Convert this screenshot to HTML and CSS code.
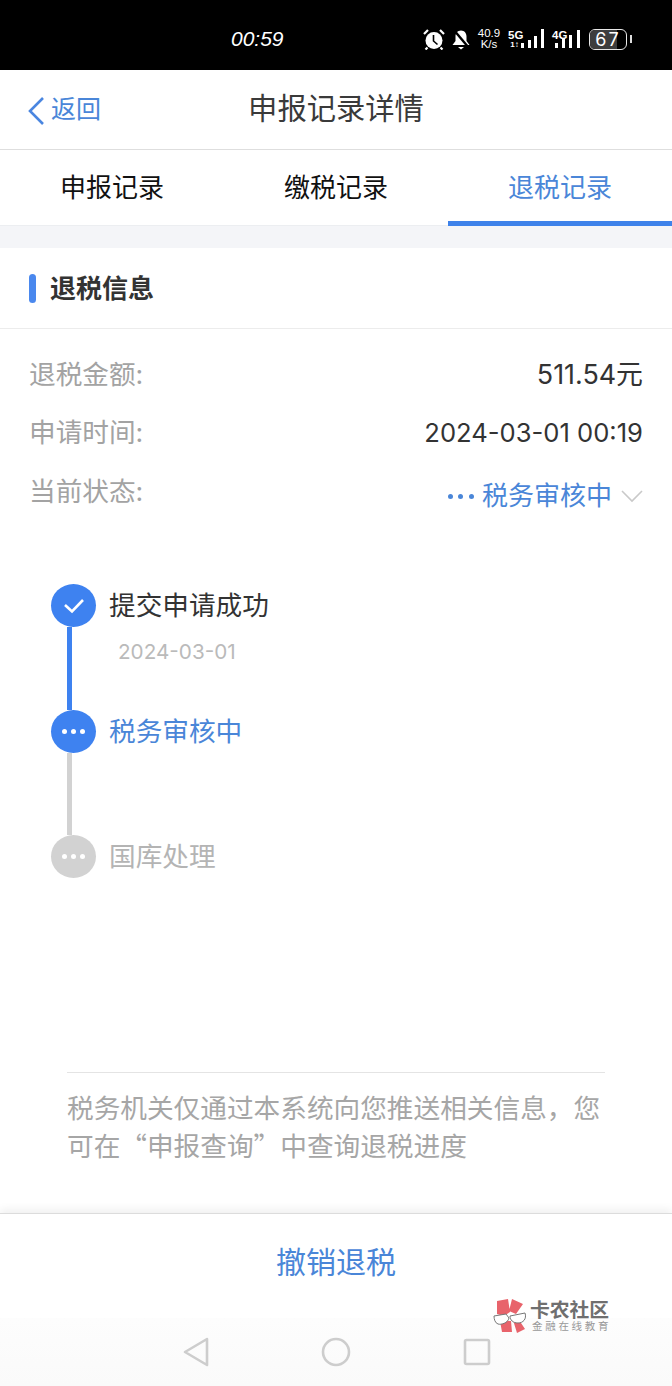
FILE: index.html
```html
<!DOCTYPE html>
<html lang="zh-CN">
<head>
    <meta charset="UTF-8">
    <meta name="viewport" content="width=device-width, initial-scale=1.0">
    <title>申报记录详情</title>
    <link rel="stylesheet" href="styles.css">
</head>
<body>
    <div class="page">
        <!-- 状态栏 -->
        <div class="status-bar">
            <span class="clock">00:59</span>
            <div class="status-icons">
                <svg class="ic-alarm" width="22" height="21" viewBox="0 0 22 21">
                    <circle cx="11" cy="11.500" r="8.500" fill="#fff"/>
                    <path d="M10.500 6V12l4 3.500" fill="none" stroke="#000" stroke-width="1.600"/>
                    <path d="M1 5l4-4M21 5l-4-4M4.500 18.500l-2 2M17.500 18.500l2 2" stroke="#fff" stroke-width="2.200"/>
                </svg>
                <svg class="ic-bell" width="18" height="21" viewBox="0 0 18 21">
                    <path d="M9 1.500c3.500 0 5.500 2.800 5.500 6v4.500l3 4h-17l3-4V7.500c0-3.200 2-6 5.500-6z" fill="#fff"/>
                    <path d="M6 18h6l-3 2.500z" fill="#fff"/>
                    <path d="M1 0l16 19" stroke="#000" stroke-width="2.400"/>
                </svg>
                <div class="speed"><span>40.9</span><span>K/s</span></div>
                <div class="net net-5g">
                    <div class="net-label"><span>5G</span><span class="net-sub">1↕</span></div>
                    <svg width="24" height="20" viewBox="0 0 24 20">
                        <path d="M0 14h3v5H0zM7 11h3v8H7zM13 7h3v12h-3zM20 0h3v19h-3z" fill="#fff"/>
                    </svg>
                </div>
                <div class="net net-4g">
                    <div class="net-label"><span>4G</span></div>
                    <svg width="27" height="20" viewBox="0 0 27 20">
                        <path d="M1 14h3v5H1zM8 9h3v10H8zM15 6h3v13h-3zM23 1h3v18h-3z" fill="#fff"/>
                    </svg>
                </div>
                <div class="battery"><div class="battery-fill"></div><span>67</span></div>
                <div class="battery-tip"></div>
            </div>
        </div>

        <div class="nav">
            <a class="back">
                <svg width="18" height="30" viewBox="0 0 18 30">
                    <path d="M16 2L3 15l13 13" fill="none" stroke="#4a86e0" stroke-width="2.600"/>
                </svg>
                <span>返回</span>
            </a>
            <div class="nav-title">申报记录详情</div>
        </div>

        <div class="tabs">
            <div class="tab">申报记录</div>
            <div class="tab">缴税记录</div>
            <div class="tab active">退税记录</div>
        </div>

        <div class="content">
            <div class="section-head">
                <i class="section-mark"></i>
                <h2>退税信息</h2>
            </div>

            <div class="rows">
                <div class="row">
                    <span class="label">退税金额:</span>
                    <span class="value amount">511.54元</span>
                </div>
                <div class="row">
                    <span class="label">申请时间:</span>
                    <span class="value">2024-03-01 00:19</span>
                </div>
                <div class="row">
                    <span class="label">当前状态:</span>
                    <span class="value status">
                        <span class="dots"><i></i><i></i><i></i></span>
                        <span>税务审核中</span>
                        <svg width="22" height="14" viewBox="0 0 22 14">
                            <path d="M1 2l10 10L21 2" fill="none" stroke="#c9c9c9" stroke-width="1.600"/>
                        </svg>
                    </span>
                </div>
            </div>

            <div class="timeline">
                <div class="step done">
                    <div class="step-mark">
                        <div class="circle">
                            <svg width="22" height="16" viewBox="0 0 22 16">
                                <path d="M2 7l7 6.500L20 2" fill="none" stroke="#fff" stroke-width="2.600"/>
                            </svg>
                        </div>
                        <div class="line"></div>
                    </div>
                    <div class="step-text">
                        <div class="step-name">提交申请成功</div>
                        <div class="step-date">2024-03-01</div>
                    </div>
                </div>
                <div class="step current">
                    <div class="step-mark">
                        <div class="circle"><span class="dots"><i></i><i></i><i></i></span></div>
                        <div class="line"></div>
                    </div>
                    <div class="step-text">
                        <div class="step-name">税务审核中</div>
                    </div>
                </div>
                <div class="step todo">
                    <div class="step-mark">
                        <div class="circle"><span class="dots"><i></i><i></i><i></i></span></div>
                    </div>
                    <div class="step-text">
                        <div class="step-name">国库处理</div>
                    </div>
                </div>
            </div>

            <div class="note">税务机关仅通过本系统向您推送相关信息，您可在“申报查询”中查询退税进度</div>
        </div>

        <div class="bottom">
            <div class="action">撤销退税</div>
            <div class="sys-nav">
                <svg width="26" height="30" viewBox="0 0 26 30">
                    <path d="M24 2L2 15l22 13z" fill="none" stroke="#cdcdcd" stroke-width="2.600" stroke-linejoin="round"/>
                </svg>
                <svg width="30" height="30" viewBox="0 0 30 30">
                    <circle cx="15" cy="15" r="13" fill="none" stroke="#cdcdcd" stroke-width="2.600"/>
                </svg>
                <svg width="28" height="28" viewBox="0 0 28 28">
                    <rect x="2" y="2" width="24" height="24" rx="1.500" fill="none" stroke="#cdcdcd" stroke-width="2.600"/>
                </svg>
            </div>
            <div class="watermark">
                <svg width="34" height="34" viewBox="0 0 34 34">
                    <path d="M4 2L15 0l2 13-6 4-7-2zM19 0l11 5-7 10-7-3zM7 22l11 0 1 11-10 0zM20 21l8 3 4 6-8 4z" fill="#e8636b"/>
                    <path d="M1 17l12-2 3 4c-1 5-8 7-11 6-3-1-4-5-4-8zM17 17l15-3c2 6-2 10-7 10-5 0-8-3-8-7z" fill="#fff" stroke="#777" stroke-width="1"/>
                </svg>
                <div class="wm-text">
                    <div class="wm-title">卡农社区</div>
                    <div class="wm-sub">金融在线教育</div>
                </div>
            </div>
        </div>
    </div>
</body>
</html>
```

FILE: styles.css
```css
* {
    box-sizing: border-box;
}
body {
    margin: 0;
    font-family: Inter, "Noto Sans CJK SC", sans-serif;
    background: white;
    color: #333;
}
.page {
    position: relative;
    width: 672px;
    height: 1386px;
    display: flex;
    flex-direction: column;
    overflow: hidden;
}

/* status bar */
.status-bar {
    height: 70px;
    flex: none;
    background: black;
    color: white;
    display: flex;
    align-items: center;
    padding: 8px 0 0 231px;
}
.clock {
    width: 192px;
    font-family: "Liberation Sans", sans-serif;
    font-style: italic;
    font-size: 21px;
}
.status-icons {
    display: flex;
    align-items: center;
    height: 21px;
}
.ic-alarm {
    margin-right: 7px;
}
.ic-bell {
    margin-right: 6px;
}
.speed {
    width: 26px;
    margin-right: 6px;
    display: flex;
    flex-direction: column;
    align-items: center;
    font-family: "Liberation Sans", sans-serif;
    font-size: 11.500px;
    line-height: 11px;
}
.net {
    display: flex;
    align-items: flex-end;
}
.net-5g {
    margin-right: 7px;
}
.net-4g {
    margin-right: 8px;
}
.net-label {
    width: 13px;
    display: flex;
    flex-direction: column;
    align-self: flex-start;
    font-family: "Liberation Sans", sans-serif;
    font-size: 11.500px;
    line-height: 12px;
    font-weight: bold;
    white-space: nowrap;
}
.net-4g .net-label {
    margin-right: -11px;
}
.net-sub {
    font-size: 8px;
    line-height: 8px;
    text-align: center;
}
.battery {
    position: relative;
    width: 38px;
    height: 21px;
    border: 1.500px solid #e8e8e8;
    border-radius: 6px;
    overflow: hidden;
    display: flex;
    align-items: center;
    justify-content: center;
    font-size: 18px;
    letter-spacing: 2px;
}
.battery span {
    position: relative;
}
.battery-fill {
    position: absolute;
    left: 0;
    top: 0;
    bottom: 0;
    width: 74%;
    background: #3d3d3d;
}
.battery-tip {
    width: 2px;
    height: 8px;
    margin-left: 3px;
    background: #ddd;
}

/* nav */
.nav {
    position: relative;
    height: 80px;
    flex: none;
    display: flex;
    align-items: center;
    justify-content: center;
    padding-bottom: 8px;
    border-bottom: 1px solid #dedede;
}
.nav-title {
    font-size: 29.300px;
    color: #3a3a3a;
}
.back {
    position: absolute;
    left: 27px;
    top: 24px;
    display: flex;
    align-items: center;
    gap: 6px;
    font-size: 25px;
    line-height: 30px;
    color: #4a86d8;
}
.back span {
    margin-bottom: 4px;
}

/* tabs */
.tabs {
    height: 76px;
    flex: none;
    display: flex;
    border-bottom: 1px solid #eceef1;
}
.tab {
    flex: 1;
    display: flex;
    align-items: center;
    justify-content: center;
    padding-bottom: 4px;
    font-size: 26px;
    color: #111;
}
.tab.active {
    color: #4a86d8;
    border-bottom: 5px solid #3e82ea;
    margin-bottom: -1px;
    padding: 0;
}

.content {
    flex: 1;
    display: flex;
    flex-direction: column;
    border-top: 22px solid #f4f5f8;
}
.section-head {
    height: 81px;
    flex: none;
    display: flex;
    align-items: center;
    gap: 14px;
    padding-left: 29px;
    border-bottom: 1px solid #ececec;
}
.section-mark {
    width: 7px;
    height: 29px;
    border-radius: 4px;
    background: #4a88ee;
}
.section-head h2 {
    margin: 0 0 4px;
    font-size: 26px;
    font-weight: bold;
    color: #333;
}

.rows {
    padding: 14px 29px 0;
}
.row {
    height: 58px;
    display: flex;
    align-items: baseline;
    justify-content: space-between;
    padding-top: 10px;
    font-size: 26.670px;
}
.row:last-child {
    align-items: flex-start;
    padding-top: 11px;
}
.label {
    color: #a3a3a3;
}
.value {
    font-size: 25.600px;
    color: #333;
}
.value.amount {
    font-size: 26.900px;
}
.status {
    display: flex;
    align-items: center;
    gap: 8px;
    margin-top: 6px;
    font-size: 26px;
    line-height: 40px;
    color: #4a86d8;
}
.status svg {
    margin-left: 1px;
}
.dots {
    display: flex;
    gap: 4px;
}
.dots i {
    width: 5px;
    height: 5px;
    border-radius: 50%;
    background: currentColor;
}
.status .dots {
    gap: 5.500px;
}

/* timeline */
.timeline {
    margin: 67px 0 0 51px;
}
.step {
    display: flex;
    gap: 13px;
    height: 125.500px;
}
.step.todo {
    height: 43px;
}
.step-mark {
    width: 45px;
    display: flex;
    flex-direction: column;
}
.circle {
    width: 45px;
    height: 43px;
    flex: none;
    border-radius: 50%;
    display: flex;
    align-items: center;
    justify-content: center;
    color: white;
    background: #3e82f0;
}
.line {
    flex: 1;
    width: 5px;
    margin-left: 16px;
    background: #3e82f0;
}
.current .line {
    background: #d2d2d2;
}
.todo .circle {
    background: #d2d2d2;
}
.step-name {
    font-size: 26.670px;
    line-height: 42px;
    color: #333;
}
.current .step-name {
    color: #4a86d8;
}
.todo .step-name {
    color: #b4b4b4;
}
.step-date {
    margin: 11px 0 0 9px;
    font-size: 20.700px;
    line-height: 30px;
    color: #bababa;
}

.note {
    margin: auto 67px 49px;
    padding-top: 15px;
    border-top: 1px solid #e4e4e4;
    font-family: "Noto Sans CJK SC", sans-serif;
    font-size: 26.670px;
    line-height: 38px;
    color: #a6a6a6;
}

/* bottom */
.bottom {
    height: 173px;
    flex: none;
    border-top: 1px solid #dcdcdc;
    box-shadow: 0 -4px 8px rgba(0,0,0,0.06);
    background: white;
    display: flex;
    flex-direction: column;
}
.action {
    height: 104px;
    padding-bottom: 12px;
    display: flex;
    align-items: center;
    justify-content: center;
    font-size: 30px;
    color: #4a86d8;
}
.sys-nav {
    flex: 1;
    display: flex;
    align-items: center;
    justify-content: center;
    gap: 112px;
    padding-left: 1px;
    background: linear-gradient(#fdfdfd, #fafafa);
}
.watermark {
    position: absolute;
    left: 493px;
    top: 1299px;
    display: flex;
    gap: 3px;
}
.wm-text {
    color: #6f6f6f;
}
.wm-title {
    font-size: 19.800px;
    line-height: 22px;
    font-weight: bold;
    white-space: nowrap;
}
.wm-sub {
    margin-left: 2px;
    font-size: 10.500px;
    line-height: 12px;
    letter-spacing: 2.700px;
    color: #999;
    white-space: nowrap;
}
```
